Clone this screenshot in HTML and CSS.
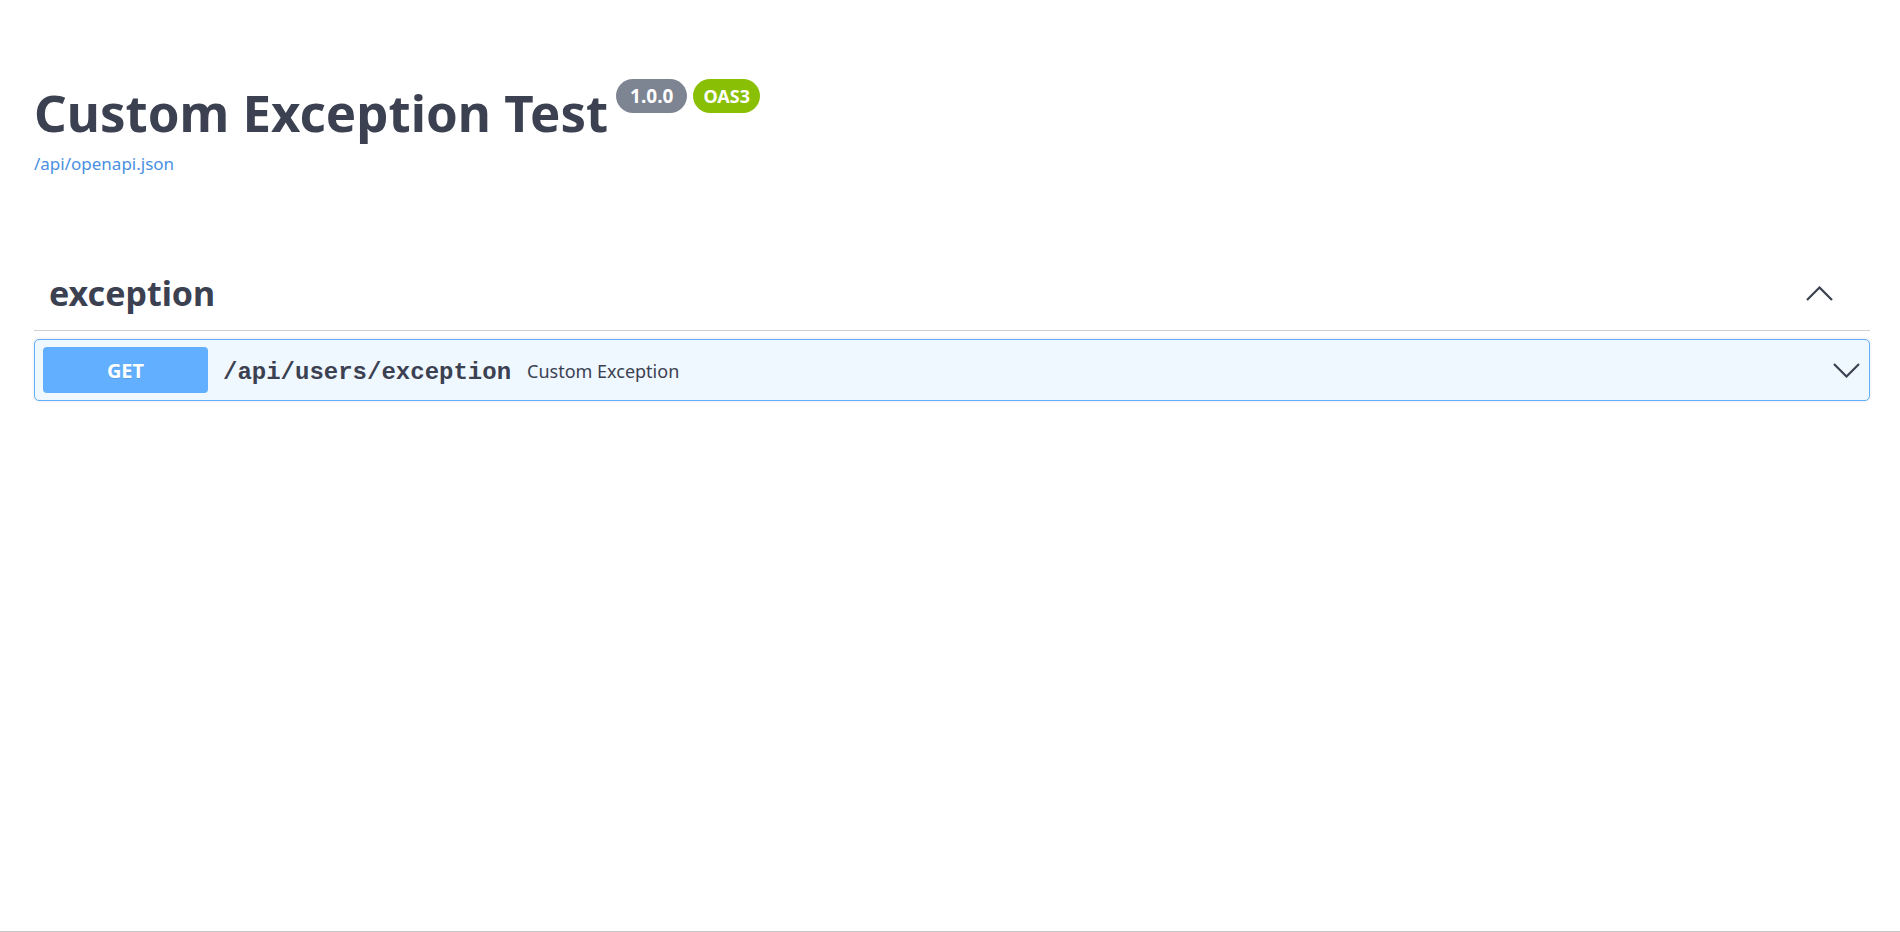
FILE: index.html
```html
<!DOCTYPE html>
<html lang="en">
<head>
<meta charset="utf-8">
<title>Custom Exception Test</title>
<link rel="stylesheet" href="styles.css">
</head>
<body>
<div class="page">
  <main class="wrapper">
    <section class="info">
      <div class="title-row">
        <h1 class="title">Custom Exception Test</h1>
        <span class="badge badge-version">1.0.0</span>
        <span class="badge badge-oas">OAS3</span>
      </div>
      <a class="spec-link" href="#">/api/openapi.json</a>
    </section>

    <section class="tag-section">
      <div class="tag-header">
        <h3 class="tag-name">exception</h3>
        <svg class="chev chev-up" width="27" height="15" viewBox="0 0 27 15" aria-hidden="true">
          <polyline points="1,14 13.5,1.5 26,14" fill="none" stroke="#3b4151" stroke-width="2.2"/>
        </svg>
      </div>
      <div class="opblock">
        <span class="method">GET</span>
        <span class="path">/api/users/exception</span>
        <span class="summary">Custom Exception</span>
        <svg class="chev chev-down" width="27" height="15" viewBox="0 0 27 15" aria-hidden="true">
          <polyline points="1,1 13.5,13.5 26,1" fill="none" stroke="#3b4151" stroke-width="2.2"/>
        </svg>
      </div>
    </section>
  </main>
  <footer class="footer"></footer>
</div>
</body>
</html>
```

FILE: styles.css
```css
html, body {
  margin: 0;
  padding: 0;
  background: #ffffff;
}

body {
  font-family: "Noto Sans", "Open Sans", sans-serif;
  color: #3b4151;
}

.page {
  display: flex;
  flex-direction: column;
  min-height: 100vh;
  box-sizing: border-box;
}

.wrapper {
  flex: 1;
  padding: 79px 30px 0 34px;
}

.info {
  display: flex;
  flex-direction: column;
  align-items: flex-start;
}

.title-row {
  display: flex;
  align-items: flex-start;
  gap: 6px;
}

.title {
  margin: 3px 2px 0 0;
  font-size: 51px;
  line-height: 60px;
  font-weight: 700;
  color: #3b4151;
}

.badge {
  display: flex;
  align-items: center;
  justify-content: center;
  height: 34px;
  border-radius: 17px;
  color: #ffffff;
  font-weight: 700;
  font-size: 19px;
  box-sizing: border-box;
}

.badge-version {
  width: 71px;
  background: #7d8492;
}

.badge-oas {
  width: 67px;
  background: #89bf04;
  font-size: 18px;
}

.spec-link {
  margin-top: 10px;
  font-size: 17px;
  line-height: 24px;
  color: #4990e2;
  text-decoration: none;
}

.tag-section {
  margin-top: 83px;
}

.tag-header {
  display: flex;
  align-items: center;
  justify-content: space-between;
  padding: 10px 37px 13px 15px;
  border-bottom: 1px solid #cfd0d3;
}

.tag-name {
  margin: 0;
  font-size: 34px;
  line-height: 48px;
  font-weight: 700;
  color: #3b4151;
}

.chev {
  display: block;
  flex: none;
}

.opblock {
  display: flex;
  align-items: center;
  margin-top: 8px;
  padding: 7px 9px 7px 8px;
  border: 1px solid #61affe;
  border-radius: 5px;
  background: #eff7ff;
  box-shadow: 0 0 3px rgba(0, 0, 0, 0.12);
}

.method {
  display: flex;
  align-items: center;
  justify-content: center;
  width: 165px;
  height: 46px;
  border-radius: 4px;
  background: #61affe;
  color: #ffffff;
  font-weight: 700;
  font-size: 20px;
  text-shadow: 0 1px 0 rgba(0, 0, 0, 0.1);
}

.path {
  margin-left: 15px;
  margin-top: 4px;
  font-family: "Liberation Mono", "Courier New", monospace;
  font-weight: 700;
  font-size: 24px;
  color: #3b4151;
}

.summary {
  margin-left: 16px;
  margin-top: 2px;
  font-size: 18px;
  color: #3b4151;
  flex: 1;
}

.footer {
  height: 1px;
  border-top: 1px solid #c6c6c6;
  box-sizing: border-box;
}
```
